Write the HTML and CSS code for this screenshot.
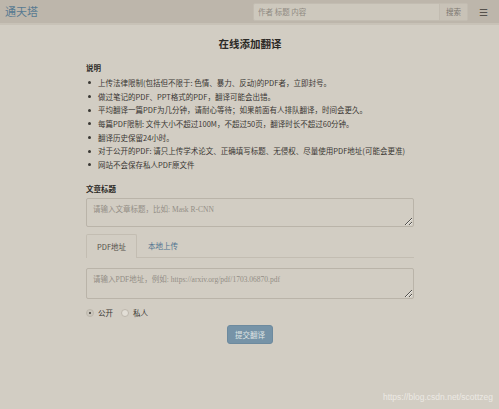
FILE: index.html
```html
<!DOCTYPE html>
<html>
<head>
<meta charset="utf-8">
<link rel="stylesheet" href="styles.css">
</head>
<body>
<header class="navbar">
  <a class="brand">通天塔</a>
  <form class="search">
    <input class="search-input" placeholder="作者 标题 内容">
    <button class="search-btn" type="button">搜索</button>
  </form>
  <span class="menu">☰</span>
</header>
<main class="container">
  <h1 class="title">在线添加翻译</h1>
  <div class="label">说明</div>
  <ul class="notes">
    <li>上传法律限制(包括但不限于: 色情、暴力、反动)的PDF者，立即封号。</li>
    <li>做过笔记的PDF、PPT格式的PDF，翻译可能会出错。</li>
    <li>平均翻译一篇PDF为几分钟，请耐心等待；如果前面有人排队翻译，时间会更久。</li>
    <li>每篇PDF限制: 文件大小不超过100M，不超过50页，翻译时长不超过60分钟。</li>
    <li>翻译历史保留24小时。</li>
    <li>对于公开的PDF: 请只上传学术论文、正确填写标题、无侵权、尽量使用PDF地址(可能会更准)</li>
    <li>网站不会保存私人PDF原文件</li>
  </ul>
  <div class="label label-title">文章标题</div>
  <textarea class="field field-title" placeholder="请输入文章标题，比如: Mask R-CNN"></textarea>
  <div class="tabs">
    <span class="tab active">PDF地址</span>
    <span class="tab">本地上传</span>
  </div>
  <textarea class="field field-url" placeholder="请输入PDF地址，例如: https://arxiv.org/pdf/1703.06870.pdf"></textarea>
  <div class="radios">
    <label class="radio"><span class="dot checked"></span>公开</label>
    <label class="radio"><span class="dot"></span>私人</label>
  </div>
  <div class="actions">
    <button class="submit" type="button">提交翻译</button>
  </div>
</main>
<div class="watermark">https://blog.csdn.net/scottzeg</div>
</body>
</html>
```

FILE: styles.css
```css
html, body {
  margin: 0;
  padding: 0;
}
body {
  background: #d2cdc3;
  font-family: "Noto Sans CJK SC", "Noto Sans", sans-serif;
  color: #35322e;
  width: 499px;
  height: 409px;
  overflow: hidden;
  position: relative;
}
.navbar {
  display: flex;
  align-items: center;
  height: 23px;
  background: #bdb6ab;
  border-bottom: 2px solid #c8c2b7;
  padding-left: 5px;
  box-sizing: content-box;
}
.brand {
  font-size: 11px;
  color: #587a91;
  line-height: 1;
}
.search {
  display: flex;
  margin: 0 0 0 auto;
  height: 18px;
}
.search-input {
  width: 187px;
  height: 18px;
  box-sizing: border-box;
  border: 1px solid #c2bcb1;
  background: #cdc8bd;
  font-family: "Noto Sans CJK SC", sans-serif;
  font-size: 7.5px;
  padding: 0 4px;
  outline: none;
  border-radius: 2px 0 0 2px;
}
.search-input::placeholder {
  color: #8f8a82;
}
.search-btn {
  width: 28px;
  height: 18px;
  border: 1px solid #c2bcb1;
  border-left: none;
  background: #c8c2b7;
  color: #7c7770;
  font-family: "Noto Sans CJK SC", sans-serif;
  font-size: 7.5px;
  padding: 0;
  border-radius: 0 2px 2px 0;
}
.menu {
  font-size: 10px;
  color: #55514b;
  margin: 0 11px 0 11px;
  line-height: 1;
}
.container {
  width: 328px;
  margin: 0 auto;
  padding-left: 1px;
}
.title {
  margin: 12px 0 0 0;
  text-align: center;
  font-size: 10.5px;
  line-height: 14px;
  font-weight: bold;
  color: #2b2926;
}
.label {
  font-size: 7.5px;
  font-weight: bold;
  line-height: 10px;
  margin-top: 12px;
  color: #2b2926;
}
.notes {
  list-style: none;
  margin: 3px 0 0 0;
  padding: 0;
}
.notes li {
  display: flex;
  align-items: center;
  font-size: 7.5px;
  line-height: 13.7px;
  height: 13.7px;
  color: #3a3733;
  white-space: nowrap;
}
.notes li::before {
  content: "";
  width: 3px;
  height: 3px;
  border-radius: 50%;
  background: #3a3733;
  margin: 0 7px 0 2px;
  flex: none;
}
.label-title {
  margin-top: 12px;
}
.field {
  display: block;
  width: 328px;
  box-sizing: border-box;
  background: #d2cdc3;
  border: 1px solid #bab4a9;
  border-radius: 2px;
  font-family: "Liberation Serif", "Noto Sans CJK SC", serif;
  font-size: 7.5px;
  padding: 4px 6px;
  resize: vertical;
  margin: 0;
}
.field::placeholder {
  color: #938e86;
}
.field-title {
  height: 29px;
  margin-top: 4px;
}
.tabs {
  display: flex;
  margin-top: 7px;
  height: 23px;
  border-bottom: 1px solid #c3bdb2;
}
.tab {
  display: flex;
  align-items: center;
  padding: 0 10px;
  font-size: 7.5px;
  color: #4f7390;
  border: 1px solid transparent;
  border-bottom: none;
  border-radius: 2px 2px 0 0;
}
.tab.active {
  color: #55514b;
  border-color: #c3bdb2;
  background: #d2cdc3;
  margin-bottom: -1px;
}
.field-url {
  height: 31px;
  margin-top: 10px;
}
.radios {
  display: flex;
  align-items: center;
  gap: 8px;
  margin-top: 9px;
  height: 10px;
}
.radio {
  display: flex;
  align-items: center;
  font-size: 7.5px;
  color: #3a3733;
}
.dot {
  width: 6px;
  height: 6px;
  border-radius: 50%;
  background: #e2ded6;
  border: 1px solid #bdb7ac;
  margin-right: 4px;
  position: relative;
}
.dot.checked {
  background: #cbc6bc;
}
.dot.checked::after {
  content: "";
  position: absolute;
  left: 2px;
  top: 2px;
  width: 2px;
  height: 2px;
  border-radius: 50%;
  background: #3a3733;
}
.actions {
  display: flex;
  justify-content: center;
  margin-top: 7px;
}
.submit {
  width: 46px;
  height: 19px;
  background: #7693a7;
  border: 1px solid #6d8a9e;
  border-radius: 3px;
  color: #dfe3e3;
  font-family: "Noto Sans CJK SC", sans-serif;
  font-size: 7.5px;
  padding: 0;
}
.watermark {
  position: absolute;
  right: 6px;
  bottom: 7px;
  font-family: "Liberation Sans", sans-serif;
  font-size: 8.5px;
  color: #ece9e3;
}
```
